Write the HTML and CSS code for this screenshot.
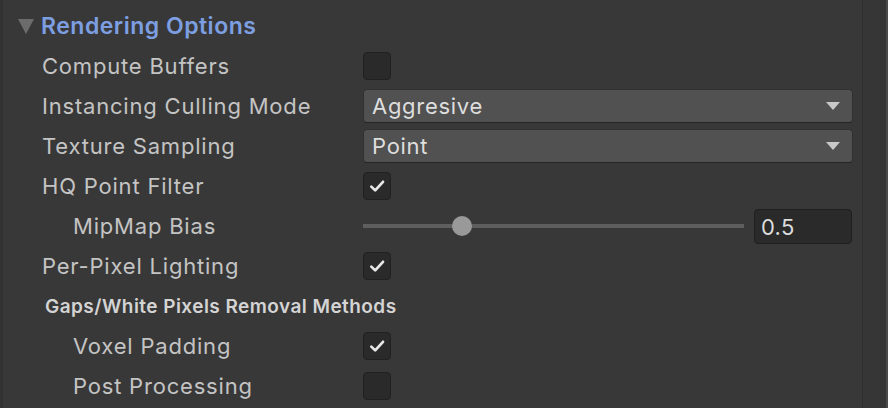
FILE: index.html
```html
<!DOCTYPE html>
<html>
<head>
<meta charset="utf-8">
<link rel="stylesheet" href="styles.css">
</head>
<body>
<div class="window">
  <div class="panel">
    <div class="row header">
      <span class="fold"></span>
      <span class="title">Rendering Options</span>
    </div>
    <div class="row">
      <div class="label">Compute Buffers</div>
      <div class="control"><span class="check"></span></div>
    </div>
    <div class="row">
      <div class="label">Instancing Culling Mode</div>
      <div class="control"><div class="dropdown"><span>Aggresive</span><span class="arrow"></span></div></div>
    </div>
    <div class="row">
      <div class="label">Texture Sampling</div>
      <div class="control"><div class="dropdown"><span>Point</span><span class="arrow"></span></div></div>
    </div>
    <div class="row">
      <div class="label">HQ Point Filter</div>
      <div class="control"><span class="check on"><svg viewBox="0 0 28 28" width="28" height="28"><path d="M8.3 14.6 L12.2 18.4 L20 9.8" fill="none" stroke="#e8e8e8" stroke-width="2.7" stroke-linecap="round" stroke-linejoin="round"/></svg></span></div>
    </div>
    <div class="row">
      <div class="label indent">MipMap Bias</div>
      <div class="control">
        <div class="slider"><div class="track"></div><div class="thumb"></div></div>
        <div class="field">0.5</div>
      </div>
    </div>
    <div class="row">
      <div class="label">Per-Pixel Lighting</div>
      <div class="control"><span class="check on"><svg viewBox="0 0 28 28" width="28" height="28"><path d="M8.3 14.6 L12.2 18.4 L20 9.8" fill="none" stroke="#e8e8e8" stroke-width="2.7" stroke-linecap="round" stroke-linejoin="round"/></svg></span></div>
    </div>
    <div class="row">
      <div class="section">Gaps/White Pixels Removal Methods</div>
    </div>
    <div class="row">
      <div class="label indent">Voxel Padding</div>
      <div class="control"><span class="check on"><svg viewBox="0 0 28 28" width="28" height="28"><path d="M8.3 14.6 L12.2 18.4 L20 9.8" fill="none" stroke="#e8e8e8" stroke-width="2.7" stroke-linecap="round" stroke-linejoin="round"/></svg></span></div>
    </div>
    <div class="row">
      <div class="label indent">Post Processing</div>
      <div class="control"><span class="check"></span></div>
    </div>
  </div>
  <div class="sidebar"></div>
</div>
</body>
</html>
```
FILE: styles.css
```css
html, body {
  margin: 0;
  padding: 0;
  background: #383838;
}
body {
  font-family: Inter, "Noto Sans", sans-serif;
  color: #c4c4c4;
  width: 888px;
  height: 408px;
  overflow: hidden;
}
.window {
  display: flex;
  height: 408px;
}
.panel {
  flex: 1;
  border-left: 3px solid #323232;
  padding-top: 6px;
  display: flex;
  flex-direction: column;
}
.sidebar {
  width: 23px;
  border-left: 1px solid #303030;
  border-right: 2px solid #4a4a4a;
  background: #363636;
}
.row {
  height: 40px;
  display: flex;
  align-items: center;
  flex-shrink: 0;
}
.header {
  padding-left: 15px;
}
.fold {
  width: 0;
  height: 0;
  border-left: 8.5px solid transparent;
  border-right: 8.5px solid transparent;
  border-top: 15px solid #6c6c6c;
  margin-right: 7px;
  margin-top: 1px;
}
.title {
  color: #7d9fe2;
  font-size: 23px;
  font-weight: 600;
  letter-spacing: 0.5px;
}
.label {
  width: 321px;
  padding-left: 39px;
  font-size: 22px;
  letter-spacing: 0.8px;
  box-sizing: content-box;
  white-space: nowrap;
}
.label.indent {
  padding-left: 70px;
  width: 290px;
}
.section {
  padding-left: 42px;
  font-size: 19px;
  font-weight: 600;
  color: #d4d4d4;
  letter-spacing: 0.45px;
  white-space: nowrap;
}
.control {
  width: 490px;
  display: flex;
  align-items: center;
}
.check {
  width: 26px;
  height: 26px;
  background: #2a2a2a;
  border: 1px solid #212121;
  border-radius: 4px;
  display: flex;
  align-items: center;
  justify-content: center;
}
.check svg {
  display: block;
  flex-shrink: 0;
}
.dropdown {
  flex: 1;
  height: 32px;
  margin-top: -1px;
  background: #515151;
  border: 1px solid #303030;
  border-bottom-color: #252525;
  border-radius: 4px;
  display: flex;
  align-items: center;
  justify-content: space-between;
  padding: 0 12px 0 8px;
  font-size: 22px;
  letter-spacing: 0.7px;
  color: #dedede;
}
.arrow {
  width: 0;
  height: 0;
  border-left: 7px solid transparent;
  border-right: 7px solid transparent;
  border-top: 8px solid #c8c8c8;
}
.slider {
  position: relative;
  width: 381px;
  height: 22px;
  display: flex;
  align-items: center;
}
.track {
  width: 100%;
  height: 4px;
  background: #5e5e5e;
}
.thumb {
  position: absolute;
  left: 89px;
  top: 1px;
  width: 20px;
  height: 20px;
  border-radius: 50%;
  background: #999999;
}
.field {
  margin-left: 10px;
  width: 90px;
  height: 33px;
  background: #2a2a2a;
  border: 1px solid #1f1f1f;
  border-radius: 4px;
  font-size: 22px;
  letter-spacing: 0.3px;
  color: #dcdcdc;
  display: flex;
  align-items: center;
  padding-left: 6px;
  box-sizing: content-box;
  margin-top: 1px;
}
```
